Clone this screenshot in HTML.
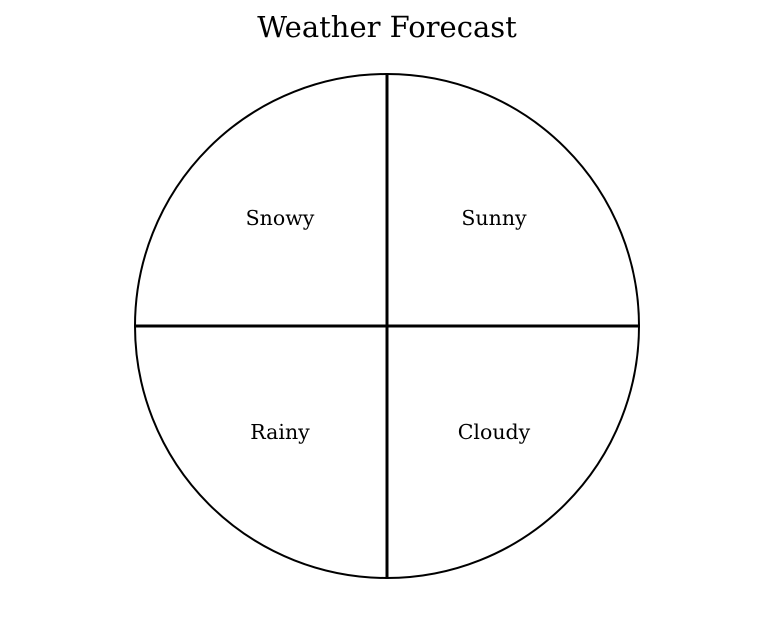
<!DOCTYPE html>
<html><head><style>html,body{margin:0;padding:0;background:#fff;width:774px;height:618px;overflow:hidden}</style></head>
<body>
<svg width="774" height="618" xmlns="http://www.w3.org/2000/svg" font-family="'DejaVu Serif','Liberation Serif',serif">
<text x="387" y="37" text-anchor="middle" font-size="29">Weather Forecast</text>
<circle cx="387" cy="326" r="252" fill="none" stroke="#000" stroke-width="2"/>
<line x1="387" y1="73" x2="387" y2="579" stroke="#000" stroke-width="3"/>
<line x1="134" y1="326" x2="640" y2="326" stroke="#000" stroke-width="3"/>
<g font-size="20.5" text-anchor="middle">
<text x="280" y="225">Snowy</text>
<text x="494" y="225">Sunny</text>
<text x="280" y="439">Rainy</text>
<text x="494" y="439">Cloudy</text>
</g>
</svg>
</body></html>
